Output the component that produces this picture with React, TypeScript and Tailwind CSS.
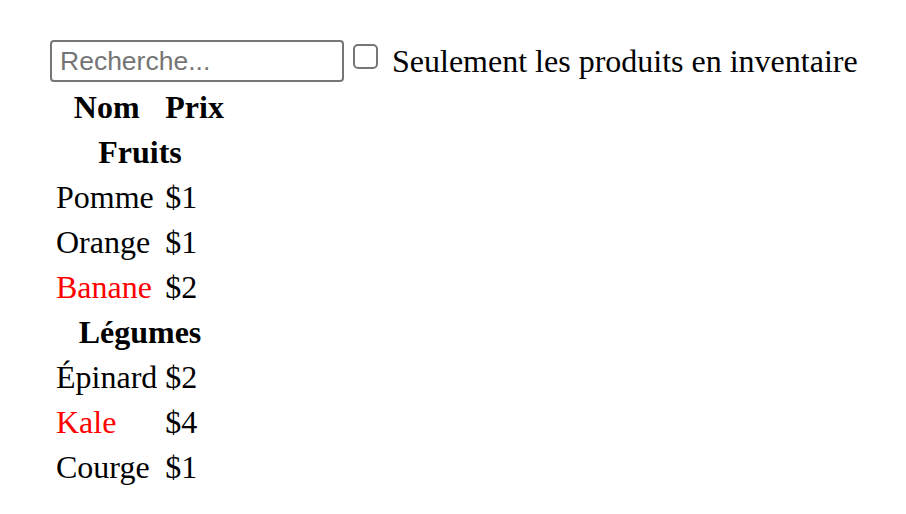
import React, { useState } from "react";

type Product = { category: string; price: string; stocked: boolean; name: string };

const PRODUCTS: Product[] = [
  { category: "Fruits", price: "$1", stocked: true, name: "Pomme" },
  { category: "Fruits", price: "$1", stocked: true, name: "Orange" },
  { category: "Fruits", price: "$2", stocked: false, name: "Banane" },
  { category: "Légumes", price: "$2", stocked: true, name: "Épinard" },
  { category: "Légumes", price: "$4", stocked: false, name: "Kale" },
  { category: "Légumes", price: "$1", stocked: true, name: "Courge" },
];

export default function App() {
  const [filterText, setFilterText] = useState("");
  const [inStockOnly, setInStockOnly] = useState(false);

  const rows: React.ReactNode[] = [];
  let lastCategory: string | null = null;
  PRODUCTS.forEach((p) => {
    if (p.name.toLowerCase().indexOf(filterText.toLowerCase()) === -1) return;
    if (inStockOnly && !p.stocked) return;
    if (p.category !== lastCategory) {
      rows.push(
        <tr key={p.category}>
          <th colSpan={2} className="p-[2px] font-bold text-center">
            {p.category}
          </th>
        </tr>
      );
    }
    rows.push(
      <tr key={p.name}>
        <td className={`p-[2px] ${p.stocked ? "text-black" : "text-[#ff0000]"}`}>{p.name}</td>
        <td className="p-[2px]">{p.price}</td>
      </tr>
    );
    lastCategory = p.category;
  });

  return (
    <div className="min-h-screen bg-white pt-[40px] pl-[50px] text-black text-[32px] leading-[37px] font-['Liberation_Serif',serif]">
      <form className="flex items-center h-[42px]">
        <input
          type="text"
          value={filterText}
          placeholder="Recherche..."
          onChange={(e) => setFilterText(e.target.value)}
          className="w-[294px] h-[42px] px-[8px] border-2 border-[#767676] rounded-[4px] text-[26.5px] font-['Liberation_Sans',Arial,sans-serif] text-black placeholder:text-[#757575] outline-none"
        />
        <label className="flex items-center">
          <input
            type="checkbox"
            checked={inStockOnly}
            onChange={(e) => setInStockOnly(e.target.checked)}
            className="appearance-none ml-[9px] mr-[14px] w-[25px] h-[25px] border-2 border-[#767676] rounded-[5px] bg-white checked:bg-blue-600 -mt-[9px]"
          />
          <span>Seulement les produits en inventaire</span>
        </label>
      </form>
      <table className="mt-[1px] border-separate border-spacing-[4px]">
        <thead>
          <tr>
            <th className="p-[2px] font-bold">Nom</th>
            <th className="p-[2px] font-bold">Prix</th>
          </tr>
        </thead>
        <tbody>{rows}</tbody>
      </table>
    </div>
  );
}
